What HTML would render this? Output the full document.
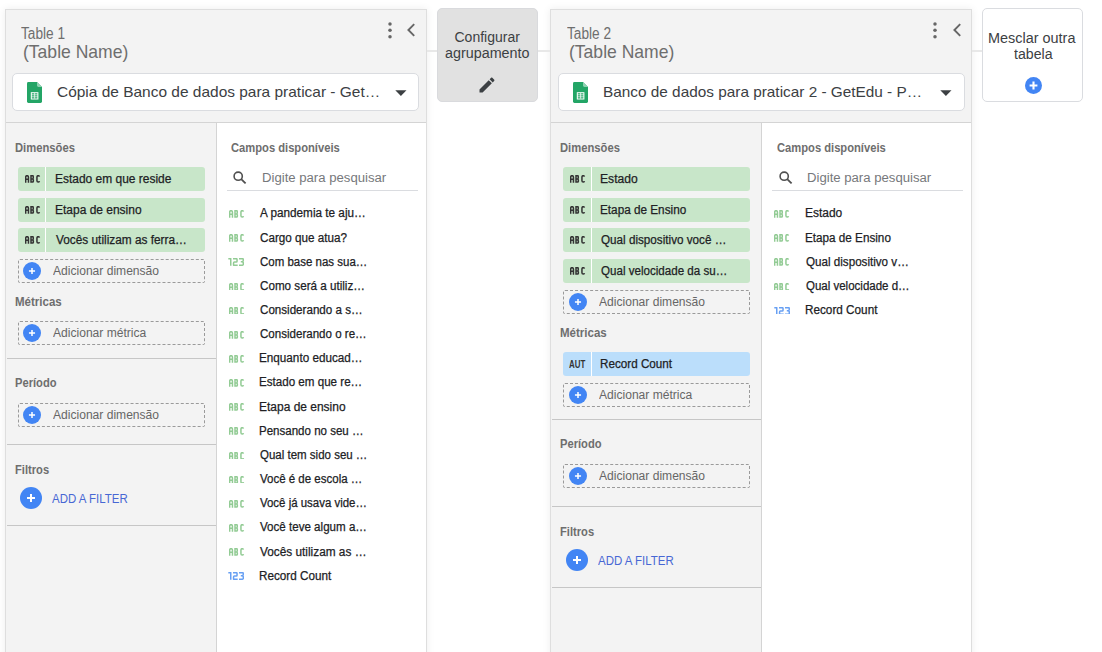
<!DOCTYPE html>
<html><head><meta charset="utf-8"><style>
html,body{margin:0;padding:0;width:1102px;height:652px;overflow:hidden;background:#fff;font-family:"Liberation Sans", sans-serif;}
.t{position:absolute;white-space:nowrap;transform-origin:0 0;}
.r{position:absolute;}
</style></head><body>
<div class="r" style="left:5px;top:9px;width:422px;height:700px;background:#f3f3f3;border:1px solid #dedede;box-sizing:border-box;box-shadow:0 0 8px rgba(0,0,0,0.075);"></div>
<div class="r" style="left:216px;top:123px;width:210px;height:600px;background:#fff;border-left:1px solid #d4d4d4;box-sizing:border-box;"></div>
<div class="r" style="left:6px;top:122px;width:420px;height:1px;background:#d4d4d4;"></div>
<div id="t1" class="t" style="left:21.10px;top:25.69px;font-size:15.6px;line-height:15.6px;color:#6e6e6e;font-weight:400;transform:scaleX(0.8760);">Table 1</div>
<div id="t2" class="t" style="left:23.26px;top:42.86px;font-size:18.6px;line-height:18.6px;color:#6e6e6e;font-weight:400;transform:scaleX(0.9436);">(Table Name)</div>
<svg class="r" style="left:387.5px;top:21.8px;" width="4" height="17" viewBox="0 0 4 17"><circle cx="2" cy="2" r="1.75" fill="#666"/><circle cx="2" cy="8.3" r="1.75" fill="#666"/><circle cx="2" cy="14.7" r="1.75" fill="#666"/></svg>
<svg class="r" style="left:406px;top:22.8px;" width="10" height="14" viewBox="0 0 10 14"><path d="M8.2,1.2 L2.4,7 L8.2,12.8" fill="none" stroke="#666" stroke-width="1.9"/></svg>
<div class="r" style="left:12px;top:73px;width:407px;height:38px;background:#fff;border:1px solid #dadce0;border-radius:5px;box-sizing:border-box;"></div>
<svg class="r" style="left:27px;top:81.7px;" width="15" height="21" viewBox="0 0 15 21"><path d="M1.4,0 H10 L15,5 V19.6 Q15,21 13.6,21 H1.4 Q0,21 0,19.6 V1.4 Q0,0 1.4,0 Z" fill="#23a566"/><path d="M10,0 L15,5 H11.4 Q10,5 10,3.6 Z" fill="#8ed1b1"/><rect x="3.8" y="10.2" width="7.6" height="7.3" fill="#fff"/><path d="M4.8,11.85 H10.4 M4.8,13.85 H10.4 M4.8,15.85 H10.4" stroke="#23a566" stroke-width="1.25"/><path d="M7.6,11 V16.6" stroke="#fff" stroke-width="0.7"/></svg>
<div id="t3" class="t" style="left:57.40px;top:85.13px;font-size:14.5px;line-height:14.5px;color:#3c4043;font-weight:400;transform:scaleX(1.0664);">Cópia de Banco de dados para praticar - Get…</div>
<svg class="r" style="left:394.8px;top:90px;" width="12" height="6" viewBox="0 0 12 6"><path d="M0.3,0.2 H11.5 L5.9,6 Z" fill="#3c4043"/></svg>
<div id="t4" class="t" style="left:14.80px;top:141.84px;font-size:12px;line-height:12px;color:#6e6e6e;font-weight:700;transform:scaleX(0.9359);">Dimensões</div>
<div class="r" style="left:18px;top:167px;width:187px;height:24px;background:#c8e6c9;border-radius:3px;"></div>
<div class="r" style="left:45px;top:167px;width:1px;height:24px;background:#fff;"></div>
<svg class="r" style="left:24.8px;top:175.1px;" width="16" height="7.7" viewBox="0 0 16 7.7"><g fill="none" stroke="#333" stroke-width="1.5" stroke-linejoin="round"><path d="M0.65,7.7 V2.3 Q0.65,0.65 2.05,0.65 Q3.45,0.65 3.45,2.3 V7.7 M0.65,4.3 H3.45"/><path stroke-linejoin="miter" d="M6.0,0.65 H7.5 Q8.25,0.65 8.25,1.5 V2.9 Q8.25,3.95 7.4,3.95 Q8.35,3.95 8.35,4.9 V6.2 Q8.35,7.05 7.5,7.05 H6.0 Z M6.0,3.95 H7.4"/><path d="M14.45,1.6 Q14.2,0.65 13.2,0.65 Q11.95,0.65 11.95,2 V5.7 Q11.95,7.05 13.2,7.05 Q14.2,7.05 14.45,6.1"/></g></svg>
<div id="t5" class="t" style="left:55.04px;top:173.12px;font-size:12.5px;line-height:12.5px;color:#202124;font-weight:400;transform:scaleX(0.9570);-webkit-text-stroke:0.25px currentColor;">Estado em que reside</div>
<div class="r" style="left:18px;top:198px;width:187px;height:24px;background:#c8e6c9;border-radius:3px;"></div>
<div class="r" style="left:45px;top:198px;width:1px;height:24px;background:#fff;"></div>
<svg class="r" style="left:24.8px;top:206.1px;" width="16" height="7.7" viewBox="0 0 16 7.7"><g fill="none" stroke="#333" stroke-width="1.5" stroke-linejoin="round"><path d="M0.65,7.7 V2.3 Q0.65,0.65 2.05,0.65 Q3.45,0.65 3.45,2.3 V7.7 M0.65,4.3 H3.45"/><path stroke-linejoin="miter" d="M6.0,0.65 H7.5 Q8.25,0.65 8.25,1.5 V2.9 Q8.25,3.95 7.4,3.95 Q8.35,3.95 8.35,4.9 V6.2 Q8.35,7.05 7.5,7.05 H6.0 Z M6.0,3.95 H7.4"/><path d="M14.45,1.6 Q14.2,0.65 13.2,0.65 Q11.95,0.65 11.95,2 V5.7 Q11.95,7.05 13.2,7.05 Q14.2,7.05 14.45,6.1"/></g></svg>
<div id="t6" class="t" style="left:55.04px;top:204.12px;font-size:12.5px;line-height:12.5px;color:#202124;font-weight:400;transform:scaleX(0.9584);-webkit-text-stroke:0.25px currentColor;">Etapa de ensino</div>
<div class="r" style="left:18px;top:228px;width:187px;height:24px;background:#c8e6c9;border-radius:3px;"></div>
<div class="r" style="left:45px;top:228px;width:1px;height:24px;background:#fff;"></div>
<svg class="r" style="left:24.8px;top:236.1px;" width="16" height="7.7" viewBox="0 0 16 7.7"><g fill="none" stroke="#333" stroke-width="1.5" stroke-linejoin="round"><path d="M0.65,7.7 V2.3 Q0.65,0.65 2.05,0.65 Q3.45,0.65 3.45,2.3 V7.7 M0.65,4.3 H3.45"/><path stroke-linejoin="miter" d="M6.0,0.65 H7.5 Q8.25,0.65 8.25,1.5 V2.9 Q8.25,3.95 7.4,3.95 Q8.35,3.95 8.35,4.9 V6.2 Q8.35,7.05 7.5,7.05 H6.0 Z M6.0,3.95 H7.4"/><path d="M14.45,1.6 Q14.2,0.65 13.2,0.65 Q11.95,0.65 11.95,2 V5.7 Q11.95,7.05 13.2,7.05 Q14.2,7.05 14.45,6.1"/></g></svg>
<div id="t7" class="t" style="left:56.00px;top:234.12px;font-size:12.5px;line-height:12.5px;color:#202124;font-weight:400;transform:scaleX(0.9467);-webkit-text-stroke:0.25px currentColor;">Vocês utilizam as ferra…</div>
<div class="r" style="left:18px;top:259px;width:187px;height:24px;border:1px dashed #9a9a9a;box-sizing:border-box;border-radius:2px;"></div>
<svg class="r" style="left:23.0px;top:262.0px;" width="18" height="18" viewBox="0 0 18 18"><circle cx="9.0" cy="9.0" r="9.0" fill="#4285f4"/><path d="M5.9399999999999995,9.0 H12.06 M9.0,5.9399999999999995 V12.06" stroke="#fff" stroke-width="1.5"/></svg>
<div id="t8" class="t" style="left:53.00px;top:265.04px;font-size:12px;line-height:12px;color:#666666;font-weight:400;transform:scaleX(1.0060);">Adicionar dimensão</div>
<div id="t9" class="t" style="left:14.80px;top:295.84px;font-size:12px;line-height:12px;color:#6e6e6e;font-weight:700;transform:scaleX(0.9592);">Métricas</div>
<div class="r" style="left:18px;top:321px;width:187px;height:24px;border:1px dashed #9a9a9a;box-sizing:border-box;border-radius:2px;"></div>
<svg class="r" style="left:23.0px;top:324.0px;" width="18" height="18" viewBox="0 0 18 18"><circle cx="9.0" cy="9.0" r="9.0" fill="#4285f4"/><path d="M5.9399999999999995,9.0 H12.06 M9.0,5.9399999999999995 V12.06" stroke="#fff" stroke-width="1.5"/></svg>
<div id="t10" class="t" style="left:53.00px;top:327.04px;font-size:12px;line-height:12px;color:#666666;font-weight:400;transform:scaleX(1.0060);">Adicionar métrica</div>
<div class="r" style="left:7px;top:358px;width:209px;height:1px;background:#c6c6c6;"></div>
<div id="t11" class="t" style="left:14.80px;top:376.74px;font-size:12px;line-height:12px;color:#6e6e6e;font-weight:700;transform:scaleX(0.9300);">Período</div>
<div class="r" style="left:18px;top:403px;width:187px;height:24px;border:1px dashed #9a9a9a;box-sizing:border-box;border-radius:2px;"></div>
<svg class="r" style="left:23.0px;top:406.0px;" width="18" height="18" viewBox="0 0 18 18"><circle cx="9.0" cy="9.0" r="9.0" fill="#4285f4"/><path d="M5.9399999999999995,9.0 H12.06 M9.0,5.9399999999999995 V12.06" stroke="#fff" stroke-width="1.5"/></svg>
<div id="t12" class="t" style="left:53.00px;top:409.04px;font-size:12px;line-height:12px;color:#666666;font-weight:400;transform:scaleX(1.0060);">Adicionar dimensão</div>
<div class="r" style="left:7px;top:444px;width:209px;height:1px;background:#c6c6c6;"></div>
<div id="t13" class="t" style="left:14.80px;top:463.64px;font-size:12px;line-height:12px;color:#6e6e6e;font-weight:700;transform:scaleX(0.9300);">Filtros</div>
<svg class="r" style="left:20.0px;top:487.0px;" width="22" height="22" viewBox="0 0 22 22"><circle cx="11.0" cy="11.0" r="11.0" fill="#4285f4"/><path d="M7.0,11.0 H15.0 M11.0,7.0 V15.0" stroke="#fff" stroke-width="2"/></svg>
<div id="t14" class="t" style="left:52.00px;top:492.92px;font-size:12.5px;line-height:12.5px;color:#4767d4;font-weight:400;transform:scaleX(0.9183);">ADD A FILTER</div>
<div class="r" style="left:7px;top:525px;width:209px;height:1px;background:#c6c6c6;"></div>
<div id="t15" class="t" style="left:231.40px;top:142.14px;font-size:12px;line-height:12px;color:#6e6e6e;font-weight:700;transform:scaleX(0.9316);">Campos disponíveis</div>
<svg class="r" style="left:233px;top:171px;" width="14" height="13" viewBox="0 0 14 13"><circle cx="5.2" cy="5.2" r="4.1" fill="none" stroke="#505050" stroke-width="1.6"/><path d="M8.2,8.2 L12.6,12.4" stroke="#505050" stroke-width="1.8"/></svg>
<div id="t16" class="t" style="left:261.55px;top:171.82px;font-size:12.5px;line-height:12.5px;color:#76787b;font-weight:400;transform:scaleX(1.0513);">Digite para pesquisar</div>
<div class="r" style="left:227px;top:190px;width:191px;height:1px;background:#dadce0;"></div>
<svg class="r" style="left:228.7px;top:210.1px;" width="16" height="7.7" viewBox="0 0 16 7.7"><g fill="none" stroke="#92cb94" stroke-width="1.5" stroke-linejoin="round"><path d="M0.65,7.7 V2.3 Q0.65,0.65 2.05,0.65 Q3.45,0.65 3.45,2.3 V7.7 M0.65,4.3 H3.45"/><path stroke-linejoin="miter" d="M6.0,0.65 H7.5 Q8.25,0.65 8.25,1.5 V2.9 Q8.25,3.95 7.4,3.95 Q8.35,3.95 8.35,4.9 V6.2 Q8.35,7.05 7.5,7.05 H6.0 Z M6.0,3.95 H7.4"/><path d="M14.45,1.6 Q14.2,0.65 13.2,0.65 Q11.95,0.65 11.95,2 V5.7 Q11.95,7.05 13.2,7.05 Q14.2,7.05 14.45,6.1"/></g></svg>
<div id="t17" class="t" style="left:260.10px;top:207.42px;font-size:12.5px;line-height:12.5px;color:#202124;font-weight:400;transform:scaleX(0.9396);-webkit-text-stroke:0.25px currentColor;">A pandemia te aju…</div>
<svg class="r" style="left:228.7px;top:234.25px;" width="16" height="7.7" viewBox="0 0 16 7.7"><g fill="none" stroke="#92cb94" stroke-width="1.5" stroke-linejoin="round"><path d="M0.65,7.7 V2.3 Q0.65,0.65 2.05,0.65 Q3.45,0.65 3.45,2.3 V7.7 M0.65,4.3 H3.45"/><path stroke-linejoin="miter" d="M6.0,0.65 H7.5 Q8.25,0.65 8.25,1.5 V2.9 Q8.25,3.95 7.4,3.95 Q8.35,3.95 8.35,4.9 V6.2 Q8.35,7.05 7.5,7.05 H6.0 Z M6.0,3.95 H7.4"/><path d="M14.45,1.6 Q14.2,0.65 13.2,0.65 Q11.95,0.65 11.95,2 V5.7 Q11.95,7.05 13.2,7.05 Q14.2,7.05 14.45,6.1"/></g></svg>
<div id="t18" class="t" style="left:260.10px;top:231.57px;font-size:12.5px;line-height:12.5px;color:#202124;font-weight:400;transform:scaleX(0.9355);-webkit-text-stroke:0.25px currentColor;">Cargo que atua?</div>
<svg class="r" style="left:228.3px;top:258.40000000000003px;" width="16" height="7.8" viewBox="0 0 16 7.8"><g fill="none" stroke="#92cb94" stroke-width="1.5" stroke-linejoin="round"><path d="M0.3,0.65 H2.75 V7.8"/><path d="M5.0,0.65 H8.3 Q9.05,0.65 9.05,1.5 V3.2 Q9.05,4.05 8.2,4.05 H6.4 Q5.55,4.05 5.55,4.9 V7.15 H9.7"/><path d="M11.0,0.65 H14.6 Q15.25,0.65 15.25,1.4 V2.6 Q15.25,3.8 14.2,3.8 H12.8 M14.2,3.8 Q15.3,3.8 15.3,5 V6.3 Q15.3,7.15 14.5,7.15 H11.0"/></g></svg>
<div id="t19" class="t" style="left:260.10px;top:255.72px;font-size:12.5px;line-height:12.5px;color:#202124;font-weight:400;transform:scaleX(0.9190);-webkit-text-stroke:0.25px currentColor;">Com base nas sua…</div>
<svg class="r" style="left:228.7px;top:282.55px;" width="16" height="7.7" viewBox="0 0 16 7.7"><g fill="none" stroke="#92cb94" stroke-width="1.5" stroke-linejoin="round"><path d="M0.65,7.7 V2.3 Q0.65,0.65 2.05,0.65 Q3.45,0.65 3.45,2.3 V7.7 M0.65,4.3 H3.45"/><path stroke-linejoin="miter" d="M6.0,0.65 H7.5 Q8.25,0.65 8.25,1.5 V2.9 Q8.25,3.95 7.4,3.95 Q8.35,3.95 8.35,4.9 V6.2 Q8.35,7.05 7.5,7.05 H6.0 Z M6.0,3.95 H7.4"/><path d="M14.45,1.6 Q14.2,0.65 13.2,0.65 Q11.95,0.65 11.95,2 V5.7 Q11.95,7.05 13.2,7.05 Q14.2,7.05 14.45,6.1"/></g></svg>
<div id="t20" class="t" style="left:260.10px;top:279.87px;font-size:12.5px;line-height:12.5px;color:#202124;font-weight:400;transform:scaleX(0.9324);-webkit-text-stroke:0.25px currentColor;">Como será a utiliz…</div>
<svg class="r" style="left:228.7px;top:306.7px;" width="16" height="7.7" viewBox="0 0 16 7.7"><g fill="none" stroke="#92cb94" stroke-width="1.5" stroke-linejoin="round"><path d="M0.65,7.7 V2.3 Q0.65,0.65 2.05,0.65 Q3.45,0.65 3.45,2.3 V7.7 M0.65,4.3 H3.45"/><path stroke-linejoin="miter" d="M6.0,0.65 H7.5 Q8.25,0.65 8.25,1.5 V2.9 Q8.25,3.95 7.4,3.95 Q8.35,3.95 8.35,4.9 V6.2 Q8.35,7.05 7.5,7.05 H6.0 Z M6.0,3.95 H7.4"/><path d="M14.45,1.6 Q14.2,0.65 13.2,0.65 Q11.95,0.65 11.95,2 V5.7 Q11.95,7.05 13.2,7.05 Q14.2,7.05 14.45,6.1"/></g></svg>
<div id="t21" class="t" style="left:260.10px;top:304.02px;font-size:12.5px;line-height:12.5px;color:#202124;font-weight:400;transform:scaleX(0.9284);-webkit-text-stroke:0.25px currentColor;">Considerando a s…</div>
<svg class="r" style="left:228.7px;top:330.84999999999997px;" width="16" height="7.7" viewBox="0 0 16 7.7"><g fill="none" stroke="#92cb94" stroke-width="1.5" stroke-linejoin="round"><path d="M0.65,7.7 V2.3 Q0.65,0.65 2.05,0.65 Q3.45,0.65 3.45,2.3 V7.7 M0.65,4.3 H3.45"/><path stroke-linejoin="miter" d="M6.0,0.65 H7.5 Q8.25,0.65 8.25,1.5 V2.9 Q8.25,3.95 7.4,3.95 Q8.35,3.95 8.35,4.9 V6.2 Q8.35,7.05 7.5,7.05 H6.0 Z M6.0,3.95 H7.4"/><path d="M14.45,1.6 Q14.2,0.65 13.2,0.65 Q11.95,0.65 11.95,2 V5.7 Q11.95,7.05 13.2,7.05 Q14.2,7.05 14.45,6.1"/></g></svg>
<div id="t22" class="t" style="left:260.10px;top:328.17px;font-size:12.5px;line-height:12.5px;color:#202124;font-weight:400;transform:scaleX(0.9246);-webkit-text-stroke:0.25px currentColor;">Considerando o re…</div>
<svg class="r" style="left:228.7px;top:354.99999999999994px;" width="16" height="7.7" viewBox="0 0 16 7.7"><g fill="none" stroke="#92cb94" stroke-width="1.5" stroke-linejoin="round"><path d="M0.65,7.7 V2.3 Q0.65,0.65 2.05,0.65 Q3.45,0.65 3.45,2.3 V7.7 M0.65,4.3 H3.45"/><path stroke-linejoin="miter" d="M6.0,0.65 H7.5 Q8.25,0.65 8.25,1.5 V2.9 Q8.25,3.95 7.4,3.95 Q8.35,3.95 8.35,4.9 V6.2 Q8.35,7.05 7.5,7.05 H6.0 Z M6.0,3.95 H7.4"/><path d="M14.45,1.6 Q14.2,0.65 13.2,0.65 Q11.95,0.65 11.95,2 V5.7 Q11.95,7.05 13.2,7.05 Q14.2,7.05 14.45,6.1"/></g></svg>
<div id="t23" class="t" style="left:259.16px;top:352.32px;font-size:12.5px;line-height:12.5px;color:#202124;font-weight:400;transform:scaleX(0.9370);-webkit-text-stroke:0.25px currentColor;">Enquanto educad…</div>
<svg class="r" style="left:228.7px;top:379.1499999999999px;" width="16" height="7.7" viewBox="0 0 16 7.7"><g fill="none" stroke="#92cb94" stroke-width="1.5" stroke-linejoin="round"><path d="M0.65,7.7 V2.3 Q0.65,0.65 2.05,0.65 Q3.45,0.65 3.45,2.3 V7.7 M0.65,4.3 H3.45"/><path stroke-linejoin="miter" d="M6.0,0.65 H7.5 Q8.25,0.65 8.25,1.5 V2.9 Q8.25,3.95 7.4,3.95 Q8.35,3.95 8.35,4.9 V6.2 Q8.35,7.05 7.5,7.05 H6.0 Z M6.0,3.95 H7.4"/><path d="M14.45,1.6 Q14.2,0.65 13.2,0.65 Q11.95,0.65 11.95,2 V5.7 Q11.95,7.05 13.2,7.05 Q14.2,7.05 14.45,6.1"/></g></svg>
<div id="t24" class="t" style="left:259.17px;top:376.47px;font-size:12.5px;line-height:12.5px;color:#202124;font-weight:400;transform:scaleX(0.9284);-webkit-text-stroke:0.25px currentColor;">Estado em que re…</div>
<svg class="r" style="left:228.7px;top:403.2999999999999px;" width="16" height="7.7" viewBox="0 0 16 7.7"><g fill="none" stroke="#92cb94" stroke-width="1.5" stroke-linejoin="round"><path d="M0.65,7.7 V2.3 Q0.65,0.65 2.05,0.65 Q3.45,0.65 3.45,2.3 V7.7 M0.65,4.3 H3.45"/><path stroke-linejoin="miter" d="M6.0,0.65 H7.5 Q8.25,0.65 8.25,1.5 V2.9 Q8.25,3.95 7.4,3.95 Q8.35,3.95 8.35,4.9 V6.2 Q8.35,7.05 7.5,7.05 H6.0 Z M6.0,3.95 H7.4"/><path d="M14.45,1.6 Q14.2,0.65 13.2,0.65 Q11.95,0.65 11.95,2 V5.7 Q11.95,7.05 13.2,7.05 Q14.2,7.05 14.45,6.1"/></g></svg>
<div id="t25" class="t" style="left:259.14px;top:400.62px;font-size:12.5px;line-height:12.5px;color:#202124;font-weight:400;transform:scaleX(0.9584);-webkit-text-stroke:0.25px currentColor;">Etapa de ensino</div>
<svg class="r" style="left:228.7px;top:427.4499999999999px;" width="16" height="7.7" viewBox="0 0 16 7.7"><g fill="none" stroke="#92cb94" stroke-width="1.5" stroke-linejoin="round"><path d="M0.65,7.7 V2.3 Q0.65,0.65 2.05,0.65 Q3.45,0.65 3.45,2.3 V7.7 M0.65,4.3 H3.45"/><path stroke-linejoin="miter" d="M6.0,0.65 H7.5 Q8.25,0.65 8.25,1.5 V2.9 Q8.25,3.95 7.4,3.95 Q8.35,3.95 8.35,4.9 V6.2 Q8.35,7.05 7.5,7.05 H6.0 Z M6.0,3.95 H7.4"/><path d="M14.45,1.6 Q14.2,0.65 13.2,0.65 Q11.95,0.65 11.95,2 V5.7 Q11.95,7.05 13.2,7.05 Q14.2,7.05 14.45,6.1"/></g></svg>
<div id="t26" class="t" style="left:259.18px;top:424.77px;font-size:12.5px;line-height:12.5px;color:#202124;font-weight:400;transform:scaleX(0.9225);-webkit-text-stroke:0.25px currentColor;">Pensando no seu …</div>
<svg class="r" style="left:228.7px;top:451.59999999999985px;" width="16" height="7.7" viewBox="0 0 16 7.7"><g fill="none" stroke="#92cb94" stroke-width="1.5" stroke-linejoin="round"><path d="M0.65,7.7 V2.3 Q0.65,0.65 2.05,0.65 Q3.45,0.65 3.45,2.3 V7.7 M0.65,4.3 H3.45"/><path stroke-linejoin="miter" d="M6.0,0.65 H7.5 Q8.25,0.65 8.25,1.5 V2.9 Q8.25,3.95 7.4,3.95 Q8.35,3.95 8.35,4.9 V6.2 Q8.35,7.05 7.5,7.05 H6.0 Z M6.0,3.95 H7.4"/><path d="M14.45,1.6 Q14.2,0.65 13.2,0.65 Q11.95,0.65 11.95,2 V5.7 Q11.95,7.05 13.2,7.05 Q14.2,7.05 14.45,6.1"/></g></svg>
<div id="t27" class="t" style="left:260.10px;top:448.92px;font-size:12.5px;line-height:12.5px;color:#202124;font-weight:400;transform:scaleX(0.9198);-webkit-text-stroke:0.25px currentColor;">Qual tem sido seu …</div>
<svg class="r" style="left:228.7px;top:475.74999999999983px;" width="16" height="7.7" viewBox="0 0 16 7.7"><g fill="none" stroke="#92cb94" stroke-width="1.5" stroke-linejoin="round"><path d="M0.65,7.7 V2.3 Q0.65,0.65 2.05,0.65 Q3.45,0.65 3.45,2.3 V7.7 M0.65,4.3 H3.45"/><path stroke-linejoin="miter" d="M6.0,0.65 H7.5 Q8.25,0.65 8.25,1.5 V2.9 Q8.25,3.95 7.4,3.95 Q8.35,3.95 8.35,4.9 V6.2 Q8.35,7.05 7.5,7.05 H6.0 Z M6.0,3.95 H7.4"/><path d="M14.45,1.6 Q14.2,0.65 13.2,0.65 Q11.95,0.65 11.95,2 V5.7 Q11.95,7.05 13.2,7.05 Q14.2,7.05 14.45,6.1"/></g></svg>
<div id="t28" class="t" style="left:260.10px;top:473.07px;font-size:12.5px;line-height:12.5px;color:#202124;font-weight:400;transform:scaleX(0.9200);-webkit-text-stroke:0.25px currentColor;">Você é de escola …</div>
<svg class="r" style="left:228.7px;top:499.8999999999998px;" width="16" height="7.7" viewBox="0 0 16 7.7"><g fill="none" stroke="#92cb94" stroke-width="1.5" stroke-linejoin="round"><path d="M0.65,7.7 V2.3 Q0.65,0.65 2.05,0.65 Q3.45,0.65 3.45,2.3 V7.7 M0.65,4.3 H3.45"/><path stroke-linejoin="miter" d="M6.0,0.65 H7.5 Q8.25,0.65 8.25,1.5 V2.9 Q8.25,3.95 7.4,3.95 Q8.35,3.95 8.35,4.9 V6.2 Q8.35,7.05 7.5,7.05 H6.0 Z M6.0,3.95 H7.4"/><path d="M14.45,1.6 Q14.2,0.65 13.2,0.65 Q11.95,0.65 11.95,2 V5.7 Q11.95,7.05 13.2,7.05 Q14.2,7.05 14.45,6.1"/></g></svg>
<div id="t29" class="t" style="left:260.10px;top:497.22px;font-size:12.5px;line-height:12.5px;color:#202124;font-weight:400;transform:scaleX(0.9155);-webkit-text-stroke:0.25px currentColor;">Você já usava vide…</div>
<svg class="r" style="left:228.7px;top:524.0499999999998px;" width="16" height="7.7" viewBox="0 0 16 7.7"><g fill="none" stroke="#92cb94" stroke-width="1.5" stroke-linejoin="round"><path d="M0.65,7.7 V2.3 Q0.65,0.65 2.05,0.65 Q3.45,0.65 3.45,2.3 V7.7 M0.65,4.3 H3.45"/><path stroke-linejoin="miter" d="M6.0,0.65 H7.5 Q8.25,0.65 8.25,1.5 V2.9 Q8.25,3.95 7.4,3.95 Q8.35,3.95 8.35,4.9 V6.2 Q8.35,7.05 7.5,7.05 H6.0 Z M6.0,3.95 H7.4"/><path d="M14.45,1.6 Q14.2,0.65 13.2,0.65 Q11.95,0.65 11.95,2 V5.7 Q11.95,7.05 13.2,7.05 Q14.2,7.05 14.45,6.1"/></g></svg>
<div id="t30" class="t" style="left:260.10px;top:521.37px;font-size:12.5px;line-height:12.5px;color:#202124;font-weight:400;transform:scaleX(0.9272);-webkit-text-stroke:0.25px currentColor;">Você teve algum a…</div>
<svg class="r" style="left:228.7px;top:548.1999999999998px;" width="16" height="7.7" viewBox="0 0 16 7.7"><g fill="none" stroke="#92cb94" stroke-width="1.5" stroke-linejoin="round"><path d="M0.65,7.7 V2.3 Q0.65,0.65 2.05,0.65 Q3.45,0.65 3.45,2.3 V7.7 M0.65,4.3 H3.45"/><path stroke-linejoin="miter" d="M6.0,0.65 H7.5 Q8.25,0.65 8.25,1.5 V2.9 Q8.25,3.95 7.4,3.95 Q8.35,3.95 8.35,4.9 V6.2 Q8.35,7.05 7.5,7.05 H6.0 Z M6.0,3.95 H7.4"/><path d="M14.45,1.6 Q14.2,0.65 13.2,0.65 Q11.95,0.65 11.95,2 V5.7 Q11.95,7.05 13.2,7.05 Q14.2,7.05 14.45,6.1"/></g></svg>
<div id="t31" class="t" style="left:260.10px;top:545.52px;font-size:12.5px;line-height:12.5px;color:#202124;font-weight:400;transform:scaleX(0.9459);-webkit-text-stroke:0.25px currentColor;">Vocês utilizam as …</div>
<svg class="r" style="left:228.3px;top:572.3499999999998px;" width="16" height="7.8" viewBox="0 0 16 7.8"><g fill="none" stroke="#68a0f3" stroke-width="1.5" stroke-linejoin="round"><path d="M0.3,0.65 H2.75 V7.8"/><path d="M5.0,0.65 H8.3 Q9.05,0.65 9.05,1.5 V3.2 Q9.05,4.05 8.2,4.05 H6.4 Q5.55,4.05 5.55,4.9 V7.15 H9.7"/><path d="M11.0,0.65 H14.6 Q15.25,0.65 15.25,1.4 V2.6 Q15.25,3.8 14.2,3.8 H12.8 M14.2,3.8 Q15.3,3.8 15.3,5 V6.3 Q15.3,7.15 14.5,7.15 H11.0"/></g></svg>
<div id="t32" class="t" style="left:259.16px;top:569.67px;font-size:12.5px;line-height:12.5px;color:#202124;font-weight:400;transform:scaleX(0.9364);-webkit-text-stroke:0.25px currentColor;">Record Count</div>
<div class="r" style="left:550px;top:9px;width:422px;height:700px;background:#f3f3f3;border:1px solid #dedede;box-sizing:border-box;box-shadow:0 0 8px rgba(0,0,0,0.075);"></div>
<div class="r" style="left:761px;top:123px;width:210px;height:600px;background:#fff;border-left:1px solid #d4d4d4;box-sizing:border-box;"></div>
<div class="r" style="left:551px;top:122px;width:420px;height:1px;background:#d4d4d4;"></div>
<div id="t33" class="t" style="left:566.60px;top:25.69px;font-size:15.6px;line-height:15.6px;color:#6e6e6e;font-weight:400;transform:scaleX(0.8760);">Table 2</div>
<div id="t34" class="t" style="left:568.76px;top:42.86px;font-size:18.6px;line-height:18.6px;color:#6e6e6e;font-weight:400;transform:scaleX(0.9436);">(Table Name)</div>
<svg class="r" style="left:933.0px;top:21.8px;" width="4" height="17" viewBox="0 0 4 17"><circle cx="2" cy="2" r="1.75" fill="#666"/><circle cx="2" cy="8.3" r="1.75" fill="#666"/><circle cx="2" cy="14.7" r="1.75" fill="#666"/></svg>
<svg class="r" style="left:951.5px;top:22.8px;" width="10" height="14" viewBox="0 0 10 14"><path d="M8.2,1.2 L2.4,7 L8.2,12.8" fill="none" stroke="#666" stroke-width="1.9"/></svg>
<div class="r" style="left:558px;top:73px;width:407px;height:38px;background:#fff;border:1px solid #dadce0;border-radius:5px;box-sizing:border-box;"></div>
<svg class="r" style="left:572.5px;top:81.7px;" width="15" height="21" viewBox="0 0 15 21"><path d="M1.4,0 H10 L15,5 V19.6 Q15,21 13.6,21 H1.4 Q0,21 0,19.6 V1.4 Q0,0 1.4,0 Z" fill="#23a566"/><path d="M10,0 L15,5 H11.4 Q10,5 10,3.6 Z" fill="#8ed1b1"/><rect x="3.8" y="10.2" width="7.6" height="7.3" fill="#fff"/><path d="M4.8,11.85 H10.4 M4.8,13.85 H10.4 M4.8,15.85 H10.4" stroke="#23a566" stroke-width="1.25"/><path d="M7.6,11 V16.6" stroke="#fff" stroke-width="0.7"/></svg>
<div id="t35" class="t" style="left:603.04px;top:85.13px;font-size:14.5px;line-height:14.5px;color:#3c4043;font-weight:400;transform:scaleX(1.0585);">Banco de dados para praticar 2 - GetEdu - P…</div>
<svg class="r" style="left:940.3px;top:90px;" width="12" height="6" viewBox="0 0 12 6"><path d="M0.3,0.2 H11.5 L5.9,6 Z" fill="#3c4043"/></svg>
<div id="t36" class="t" style="left:560.30px;top:141.84px;font-size:12px;line-height:12px;color:#6e6e6e;font-weight:700;transform:scaleX(0.9359);">Dimensões</div>
<div class="r" style="left:563px;top:167px;width:187px;height:24px;background:#c8e6c9;border-radius:3px;"></div>
<div class="r" style="left:591px;top:167px;width:1px;height:24px;background:#fff;"></div>
<svg class="r" style="left:570.3px;top:175.1px;" width="16" height="7.7" viewBox="0 0 16 7.7"><g fill="none" stroke="#333" stroke-width="1.5" stroke-linejoin="round"><path d="M0.65,7.7 V2.3 Q0.65,0.65 2.05,0.65 Q3.45,0.65 3.45,2.3 V7.7 M0.65,4.3 H3.45"/><path stroke-linejoin="miter" d="M6.0,0.65 H7.5 Q8.25,0.65 8.25,1.5 V2.9 Q8.25,3.95 7.4,3.95 Q8.35,3.95 8.35,4.9 V6.2 Q8.35,7.05 7.5,7.05 H6.0 Z M6.0,3.95 H7.4"/><path d="M14.45,1.6 Q14.2,0.65 13.2,0.65 Q11.95,0.65 11.95,2 V5.7 Q11.95,7.05 13.2,7.05 Q14.2,7.05 14.45,6.1"/></g></svg>
<div id="t37" class="t" style="left:600.03px;top:173.12px;font-size:12.5px;line-height:12.5px;color:#202124;font-weight:400;transform:scaleX(0.9684);-webkit-text-stroke:0.25px currentColor;">Estado</div>
<div class="r" style="left:563px;top:198px;width:187px;height:24px;background:#c8e6c9;border-radius:3px;"></div>
<div class="r" style="left:591px;top:198px;width:1px;height:24px;background:#fff;"></div>
<svg class="r" style="left:570.3px;top:206.1px;" width="16" height="7.7" viewBox="0 0 16 7.7"><g fill="none" stroke="#333" stroke-width="1.5" stroke-linejoin="round"><path d="M0.65,7.7 V2.3 Q0.65,0.65 2.05,0.65 Q3.45,0.65 3.45,2.3 V7.7 M0.65,4.3 H3.45"/><path stroke-linejoin="miter" d="M6.0,0.65 H7.5 Q8.25,0.65 8.25,1.5 V2.9 Q8.25,3.95 7.4,3.95 Q8.35,3.95 8.35,4.9 V6.2 Q8.35,7.05 7.5,7.05 H6.0 Z M6.0,3.95 H7.4"/><path d="M14.45,1.6 Q14.2,0.65 13.2,0.65 Q11.95,0.65 11.95,2 V5.7 Q11.95,7.05 13.2,7.05 Q14.2,7.05 14.45,6.1"/></g></svg>
<div id="t38" class="t" style="left:600.06px;top:204.12px;font-size:12.5px;line-height:12.5px;color:#202124;font-weight:400;transform:scaleX(0.9396);-webkit-text-stroke:0.25px currentColor;">Etapa de Ensino</div>
<div class="r" style="left:563px;top:228px;width:187px;height:24px;background:#c8e6c9;border-radius:3px;"></div>
<div class="r" style="left:591px;top:228px;width:1px;height:24px;background:#fff;"></div>
<svg class="r" style="left:570.3px;top:236.1px;" width="16" height="7.7" viewBox="0 0 16 7.7"><g fill="none" stroke="#333" stroke-width="1.5" stroke-linejoin="round"><path d="M0.65,7.7 V2.3 Q0.65,0.65 2.05,0.65 Q3.45,0.65 3.45,2.3 V7.7 M0.65,4.3 H3.45"/><path stroke-linejoin="miter" d="M6.0,0.65 H7.5 Q8.25,0.65 8.25,1.5 V2.9 Q8.25,3.95 7.4,3.95 Q8.35,3.95 8.35,4.9 V6.2 Q8.35,7.05 7.5,7.05 H6.0 Z M6.0,3.95 H7.4"/><path d="M14.45,1.6 Q14.2,0.65 13.2,0.65 Q11.95,0.65 11.95,2 V5.7 Q11.95,7.05 13.2,7.05 Q14.2,7.05 14.45,6.1"/></g></svg>
<div id="t39" class="t" style="left:601.00px;top:234.12px;font-size:12.5px;line-height:12.5px;color:#202124;font-weight:400;transform:scaleX(0.9346);-webkit-text-stroke:0.25px currentColor;">Qual dispositivo você …</div>
<div class="r" style="left:563px;top:259px;width:187px;height:24px;background:#c8e6c9;border-radius:3px;"></div>
<div class="r" style="left:591px;top:259px;width:1px;height:24px;background:#fff;"></div>
<svg class="r" style="left:570.3px;top:267.1px;" width="16" height="7.7" viewBox="0 0 16 7.7"><g fill="none" stroke="#333" stroke-width="1.5" stroke-linejoin="round"><path d="M0.65,7.7 V2.3 Q0.65,0.65 2.05,0.65 Q3.45,0.65 3.45,2.3 V7.7 M0.65,4.3 H3.45"/><path stroke-linejoin="miter" d="M6.0,0.65 H7.5 Q8.25,0.65 8.25,1.5 V2.9 Q8.25,3.95 7.4,3.95 Q8.35,3.95 8.35,4.9 V6.2 Q8.35,7.05 7.5,7.05 H6.0 Z M6.0,3.95 H7.4"/><path d="M14.45,1.6 Q14.2,0.65 13.2,0.65 Q11.95,0.65 11.95,2 V5.7 Q11.95,7.05 13.2,7.05 Q14.2,7.05 14.45,6.1"/></g></svg>
<div id="t40" class="t" style="left:601.00px;top:265.12px;font-size:12.5px;line-height:12.5px;color:#202124;font-weight:400;transform:scaleX(0.9267);-webkit-text-stroke:0.25px currentColor;">Qual velocidade da su…</div>
<div class="r" style="left:563px;top:290px;width:187px;height:24px;border:1px dashed #9a9a9a;box-sizing:border-box;border-radius:2px;"></div>
<svg class="r" style="left:568.5px;top:293.0px;" width="18" height="18" viewBox="0 0 18 18"><circle cx="9.0" cy="9.0" r="9.0" fill="#4285f4"/><path d="M5.9399999999999995,9.0 H12.06 M9.0,5.9399999999999995 V12.06" stroke="#fff" stroke-width="1.5"/></svg>
<div id="t41" class="t" style="left:598.50px;top:296.04px;font-size:12px;line-height:12px;color:#666666;font-weight:400;transform:scaleX(1.0060);">Adicionar dimensão</div>
<div id="t42" class="t" style="left:560.30px;top:326.84px;font-size:12px;line-height:12px;color:#6e6e6e;font-weight:700;transform:scaleX(0.9592);">Métricas</div>
<div class="r" style="left:563px;top:352px;width:187px;height:24px;background:#bbdefb;border-radius:3px;"></div>
<div class="r" style="left:591px;top:352px;width:1px;height:24px;background:#fff;"></div>
<div id="t43" class="t" style="left:569.00px;top:358.81px;font-size:10.5px;line-height:10.5px;color:#333;font-weight:700;transform:scaleX(0.7545);">AUT</div>
<div id="t44" class="t" style="left:600.06px;top:358.12px;font-size:12.5px;line-height:12.5px;color:#202124;font-weight:400;transform:scaleX(0.9351);-webkit-text-stroke:0.25px currentColor;">Record Count</div>
<div class="r" style="left:563px;top:383px;width:187px;height:24px;border:1px dashed #9a9a9a;box-sizing:border-box;border-radius:2px;"></div>
<svg class="r" style="left:568.5px;top:386.0px;" width="18" height="18" viewBox="0 0 18 18"><circle cx="9.0" cy="9.0" r="9.0" fill="#4285f4"/><path d="M5.9399999999999995,9.0 H12.06 M9.0,5.9399999999999995 V12.06" stroke="#fff" stroke-width="1.5"/></svg>
<div id="t45" class="t" style="left:598.50px;top:389.04px;font-size:12px;line-height:12px;color:#666666;font-weight:400;transform:scaleX(1.0060);">Adicionar métrica</div>
<div class="r" style="left:552px;top:419px;width:209px;height:1px;background:#c6c6c6;"></div>
<div id="t46" class="t" style="left:560.30px;top:437.74px;font-size:12px;line-height:12px;color:#6e6e6e;font-weight:700;transform:scaleX(0.9300);">Período</div>
<div class="r" style="left:563px;top:464px;width:187px;height:24px;border:1px dashed #9a9a9a;box-sizing:border-box;border-radius:2px;"></div>
<svg class="r" style="left:568.5px;top:467.0px;" width="18" height="18" viewBox="0 0 18 18"><circle cx="9.0" cy="9.0" r="9.0" fill="#4285f4"/><path d="M5.9399999999999995,9.0 H12.06 M9.0,5.9399999999999995 V12.06" stroke="#fff" stroke-width="1.5"/></svg>
<div id="t47" class="t" style="left:598.50px;top:470.04px;font-size:12px;line-height:12px;color:#666666;font-weight:400;transform:scaleX(1.0060);">Adicionar dimensão</div>
<div class="r" style="left:552px;top:506px;width:209px;height:1px;background:#c6c6c6;"></div>
<div id="t48" class="t" style="left:560.30px;top:525.64px;font-size:12px;line-height:12px;color:#6e6e6e;font-weight:700;transform:scaleX(0.9300);">Filtros</div>
<svg class="r" style="left:565.5px;top:549.0px;" width="22" height="22" viewBox="0 0 22 22"><circle cx="11.0" cy="11.0" r="11.0" fill="#4285f4"/><path d="M7.0,11.0 H15.0 M11.0,7.0 V15.0" stroke="#fff" stroke-width="2"/></svg>
<div id="t49" class="t" style="left:597.50px;top:554.92px;font-size:12.5px;line-height:12.5px;color:#4767d4;font-weight:400;transform:scaleX(0.9183);">ADD A FILTER</div>
<div class="r" style="left:552px;top:587px;width:209px;height:1px;background:#c6c6c6;"></div>
<div id="t50" class="t" style="left:776.90px;top:142.14px;font-size:12px;line-height:12px;color:#6e6e6e;font-weight:700;transform:scaleX(0.9316);">Campos disponíveis</div>
<svg class="r" style="left:778.5px;top:171px;" width="14" height="13" viewBox="0 0 14 13"><circle cx="5.2" cy="5.2" r="4.1" fill="none" stroke="#505050" stroke-width="1.6"/><path d="M8.2,8.2 L12.6,12.4" stroke="#505050" stroke-width="1.8"/></svg>
<div id="t51" class="t" style="left:807.05px;top:171.82px;font-size:12.5px;line-height:12.5px;color:#76787b;font-weight:400;transform:scaleX(1.0513);">Digite para pesquisar</div>
<div class="r" style="left:772px;top:190px;width:191px;height:1px;background:#dadce0;"></div>
<svg class="r" style="left:774.2px;top:210.1px;" width="16" height="7.7" viewBox="0 0 16 7.7"><g fill="none" stroke="#92cb94" stroke-width="1.5" stroke-linejoin="round"><path d="M0.65,7.7 V2.3 Q0.65,0.65 2.05,0.65 Q3.45,0.65 3.45,2.3 V7.7 M0.65,4.3 H3.45"/><path stroke-linejoin="miter" d="M6.0,0.65 H7.5 Q8.25,0.65 8.25,1.5 V2.9 Q8.25,3.95 7.4,3.95 Q8.35,3.95 8.35,4.9 V6.2 Q8.35,7.05 7.5,7.05 H6.0 Z M6.0,3.95 H7.4"/><path d="M14.45,1.6 Q14.2,0.65 13.2,0.65 Q11.95,0.65 11.95,2 V5.7 Q11.95,7.05 13.2,7.05 Q14.2,7.05 14.45,6.1"/></g></svg>
<div id="t52" class="t" style="left:804.64px;top:207.42px;font-size:12.5px;line-height:12.5px;color:#202124;font-weight:400;transform:scaleX(0.9579);-webkit-text-stroke:0.25px currentColor;">Estado</div>
<svg class="r" style="left:774.2px;top:234.25px;" width="16" height="7.7" viewBox="0 0 16 7.7"><g fill="none" stroke="#92cb94" stroke-width="1.5" stroke-linejoin="round"><path d="M0.65,7.7 V2.3 Q0.65,0.65 2.05,0.65 Q3.45,0.65 3.45,2.3 V7.7 M0.65,4.3 H3.45"/><path stroke-linejoin="miter" d="M6.0,0.65 H7.5 Q8.25,0.65 8.25,1.5 V2.9 Q8.25,3.95 7.4,3.95 Q8.35,3.95 8.35,4.9 V6.2 Q8.35,7.05 7.5,7.05 H6.0 Z M6.0,3.95 H7.4"/><path d="M14.45,1.6 Q14.2,0.65 13.2,0.65 Q11.95,0.65 11.95,2 V5.7 Q11.95,7.05 13.2,7.05 Q14.2,7.05 14.45,6.1"/></g></svg>
<div id="t53" class="t" style="left:804.66px;top:231.57px;font-size:12.5px;line-height:12.5px;color:#202124;font-weight:400;transform:scaleX(0.9363);-webkit-text-stroke:0.25px currentColor;">Etapa de Ensino</div>
<svg class="r" style="left:774.2px;top:258.40000000000003px;" width="16" height="7.7" viewBox="0 0 16 7.7"><g fill="none" stroke="#92cb94" stroke-width="1.5" stroke-linejoin="round"><path d="M0.65,7.7 V2.3 Q0.65,0.65 2.05,0.65 Q3.45,0.65 3.45,2.3 V7.7 M0.65,4.3 H3.45"/><path stroke-linejoin="miter" d="M6.0,0.65 H7.5 Q8.25,0.65 8.25,1.5 V2.9 Q8.25,3.95 7.4,3.95 Q8.35,3.95 8.35,4.9 V6.2 Q8.35,7.05 7.5,7.05 H6.0 Z M6.0,3.95 H7.4"/><path d="M14.45,1.6 Q14.2,0.65 13.2,0.65 Q11.95,0.65 11.95,2 V5.7 Q11.95,7.05 13.2,7.05 Q14.2,7.05 14.45,6.1"/></g></svg>
<div id="t54" class="t" style="left:805.60px;top:255.72px;font-size:12.5px;line-height:12.5px;color:#202124;font-weight:400;transform:scaleX(0.9303);-webkit-text-stroke:0.25px currentColor;">Qual dispositivo v…</div>
<svg class="r" style="left:774.2px;top:282.55px;" width="16" height="7.7" viewBox="0 0 16 7.7"><g fill="none" stroke="#92cb94" stroke-width="1.5" stroke-linejoin="round"><path d="M0.65,7.7 V2.3 Q0.65,0.65 2.05,0.65 Q3.45,0.65 3.45,2.3 V7.7 M0.65,4.3 H3.45"/><path stroke-linejoin="miter" d="M6.0,0.65 H7.5 Q8.25,0.65 8.25,1.5 V2.9 Q8.25,3.95 7.4,3.95 Q8.35,3.95 8.35,4.9 V6.2 Q8.35,7.05 7.5,7.05 H6.0 Z M6.0,3.95 H7.4"/><path d="M14.45,1.6 Q14.2,0.65 13.2,0.65 Q11.95,0.65 11.95,2 V5.7 Q11.95,7.05 13.2,7.05 Q14.2,7.05 14.45,6.1"/></g></svg>
<div id="t55" class="t" style="left:805.60px;top:279.87px;font-size:12.5px;line-height:12.5px;color:#202124;font-weight:400;transform:scaleX(0.9198);-webkit-text-stroke:0.25px currentColor;">Qual velocidade d…</div>
<svg class="r" style="left:773.8px;top:306.7px;" width="16" height="7.8" viewBox="0 0 16 7.8"><g fill="none" stroke="#68a0f3" stroke-width="1.5" stroke-linejoin="round"><path d="M0.3,0.65 H2.75 V7.8"/><path d="M5.0,0.65 H8.3 Q9.05,0.65 9.05,1.5 V3.2 Q9.05,4.05 8.2,4.05 H6.4 Q5.55,4.05 5.55,4.9 V7.15 H9.7"/><path d="M11.0,0.65 H14.6 Q15.25,0.65 15.25,1.4 V2.6 Q15.25,3.8 14.2,3.8 H12.8 M14.2,3.8 Q15.3,3.8 15.3,5 V6.3 Q15.3,7.15 14.5,7.15 H11.0"/></g></svg>
<div id="t56" class="t" style="left:804.66px;top:304.02px;font-size:12.5px;line-height:12.5px;color:#202124;font-weight:400;transform:scaleX(0.9390);-webkit-text-stroke:0.25px currentColor;">Record Count</div>
<div class="r" style="left:427px;top:50px;width:10px;height:2px;background:#e8e8e8;"></div>
<div class="r" style="left:538px;top:50px;width:12px;height:2px;background:#e8e8e8;"></div>
<div class="r" style="left:972px;top:50px;width:10px;height:2px;background:#e8e8e8;"></div>
<div class="r" style="left:437px;top:8px;width:101px;height:94px;background:#e1e1e1;border:1px solid #d9dadd;border-radius:5px;box-sizing:border-box;"></div>
<div id="t57" class="t" style="left:454.50px;top:30.35px;font-size:14px;line-height:14px;color:#3c4043;font-weight:400;transform:scaleX(1.0000);">Configurar</div>
<div id="t58" class="t" style="left:445.20px;top:46.15px;font-size:14px;line-height:14px;color:#3c4043;font-weight:400;transform:scaleX(1.0244);">agrupamento</div>
<svg class="r" style="left:476.7px;top:74.5px;" width="20" height="20" viewBox="0 0 24 24"><path d="M3 17.25V21h3.75L17.81 9.94l-3.75-3.75L3 17.25zM20.71 7.04c.39-.39.39-1.02 0-1.41l-2.34-2.34c-.39-.39-1.02-.39-1.41 0l-1.83 1.83 3.75 3.75 1.83-1.83z" fill="#3c4043"/></svg>
<div class="r" style="left:982px;top:8px;width:101px;height:94px;background:#fff;border:1px solid #dadce0;border-radius:5px;box-sizing:border-box;"></div>
<div id="t59" class="t" style="left:988.27px;top:30.95px;font-size:14px;line-height:14px;color:#3c4043;font-weight:400;transform:scaleX(1.0310);">Mesclar outra</div>
<div id="t60" class="t" style="left:1013.70px;top:46.85px;font-size:14px;line-height:14px;color:#3c4043;font-weight:400;transform:scaleX(1.0105);">tabela</div>
<svg class="r" style="left:1024.5px;top:76.6px;" width="17" height="17" viewBox="0 0 17 17"><circle cx="8.5" cy="8.5" r="8.5" fill="#4285f4"/><path d="M4.6,8.5 H12.4 M8.5,4.6 V12.4" stroke="#fff" stroke-width="2.1"/></svg>
</body></html>
